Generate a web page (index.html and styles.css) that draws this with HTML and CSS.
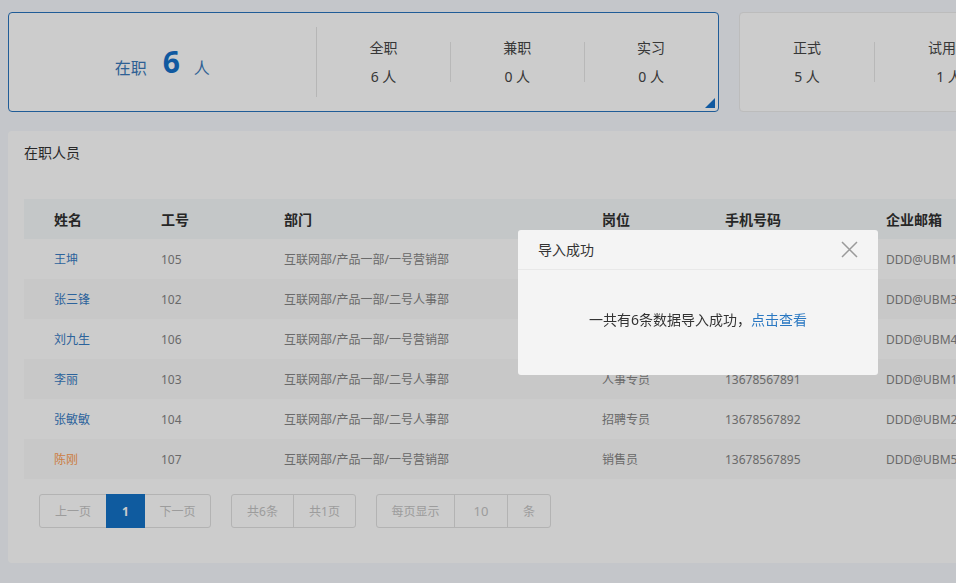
FILE: index.html
```html
<!DOCTYPE html>
<html lang="zh-CN">
<head>
<meta charset="utf-8">
<title>在职人员</title>
<link rel="stylesheet" href="styles.css">
</head>
<body>
<div class="page">
  <div class="stats-row">
    <div class="stat-card primary">
      <div class="summary">
        <span class="sum-label">在职</span>
        <span class="sum-num">6</span>
        <span class="sum-unit">人</span>
      </div>
      <div class="stat"><div class="stat-t">全职</div><div class="stat-v">6 人</div></div>
      <i class="sep"></i>
      <div class="stat"><div class="stat-t">兼职</div><div class="stat-v">0 人</div></div>
      <i class="sep"></i>
      <div class="stat"><div class="stat-t">实习</div><div class="stat-v">0 人</div></div>
      <span class="corner"></span>
    </div>
    <div class="stat-card">
      <div class="stat"><div class="stat-t">正式</div><div class="stat-v">5 人</div></div>
      <i class="sep"></i>
      <div class="stat wide"><div class="stat-t">试用期</div><div class="stat-v">1 人</div></div>
      <i class="sep"></i>
      <div class="stat"><div class="stat-t">待离职</div><div class="stat-v">0 人</div></div>
    </div>
  </div>

  <div class="panel">
    <div class="panel-title">在职人员</div>
    <table class="grid">
      <colgroup>
        <col class="c1"><col class="c2"><col class="c3"><col class="c4"><col class="c5"><col class="c6">
      </colgroup>
      <thead>
        <tr><th>姓名</th><th>工号</th><th>部门</th><th>岗位</th><th>手机号码</th><th>企业邮箱</th></tr>
      </thead>
      <tbody>
        <tr><td class="name">王坤</td><td>105</td><td>互联网部/产品一部/一号营销部</td><td>销售员</td><td>13678567896</td><td>DDD@UBM1.com</td></tr>
        <tr><td class="name">张三锋</td><td>102</td><td>互联网部/产品一部/二号人事部</td><td>人事专员</td><td>13678567893</td><td>DDD@UBM3.com</td></tr>
        <tr><td class="name">刘九生</td><td>106</td><td>互联网部/产品一部/一号营销部</td><td>销售员</td><td>13678567894</td><td>DDD@UBM4.com</td></tr>
        <tr><td class="name">李丽</td><td>103</td><td>互联网部/产品一部/二号人事部</td><td>人事专员</td><td>13678567891</td><td>DDD@UBM1.com</td></tr>
        <tr><td class="name">张敏敏</td><td>104</td><td>互联网部/产品一部/二号人事部</td><td>招聘专员</td><td>13678567892</td><td>DDD@UBM2.com</td></tr>
        <tr><td class="name warn">陈刚</td><td>107</td><td>互联网部/产品一部/一号营销部</td><td>销售员</td><td>13678567895</td><td>DDD@UBM5.com</td></tr>
      </tbody>
    </table>
    <div class="pager">
      <div class="pg-group">
        <span class="pg w-prev">上一页</span>
        <span class="pg w-cur active">1</span>
        <span class="pg w-next">下一页</span>
      </div>
      <div class="pg-group">
        <span class="pg w-total">共6条</span>
        <span class="pg w-total">共1页</span>
      </div>
      <div class="pg-group">
        <span class="pg w-per">每页显示</span>
        <span class="pg w-num">10</span>
        <span class="pg w-unit">条</span>
      </div>
    </div>
  </div>
</div>

<div class="mask"></div>

<div class="modal">
  <div class="modal-head">
    <span class="modal-title">导入成功</span>
    <svg class="modal-close" width="17" height="17" viewBox="0 0 17 17"><path d="M1 1L16 16M16 1L1 16" stroke="#9a9a9a" stroke-width="1.5" fill="none"/></svg>
  </div>
  <div class="modal-body">一共有6条数据导入成功，<a class="modal-link">点击查看</a></div>
</div>
</body>
</html>
```

FILE: styles.css
```css
html, body {
  margin: 0;
  padding: 0;
  overflow: hidden;
  height: 100%;
}
body {
  background: #f5f8fd;
  font-family: "Noto Sans", "Noto Sans CJK SC", sans-serif;
  color: #333;
  font-size: 14px;
}
.page {
  width: 1400px;
  padding: 12px 8px 0 8px;
}
.stats-row {
  display: flex;
  gap: 20px;
  margin-bottom: 19px;
}
.stat-card {
  position: relative;
  display: flex;
  align-items: center;
  width: 711px;
  height: 100px;
  box-sizing: border-box;
  background: #fff;
  border: 1px solid #ebebeb;
  border-radius: 4px;
}
.stat-card.primary {
  border-color: #2874bd;
}
.summary {
  width: 307px;
  height: 70px;
  display: flex;
  align-items: center;
  justify-content: center;
  border-right: 1px solid #e4e4e4;
  color: #3a79ba;
}
.sum-label, .sum-unit {
  font-size: 16px;
  line-height: 20px;
  margin-top: 12px;
}
.sum-num {
  font-size: 30px;
  font-weight: 700;
  color: #1570c8;
  margin: 0 14px 0 16px;
  line-height: 34px;
}
.stat {
  width: 134px;
  text-align: center;
  color: #454545;
  line-height: 20px;
}
.stat.wide { width: 150px; }
.stat-t { margin-bottom: 9px; }
.sep {
  width: 1px;
  height: 40px;
  background: #e6e6e6;
  margin: 0 -1px 0 0;
  align-self: center;
}
.corner {
  position: absolute;
  right: 3px;
  bottom: 3px;
  width: 0;
  height: 0;
  border-left: 10px solid transparent;
  border-bottom: 10px solid #1570c8;
}

.panel {
  background: #fff;
  border-radius: 4px;
  height: 432px;
  box-sizing: border-box;
  padding: 12px 16px 0 16px;
}
.panel-title {
  line-height: 20px;
  color: #333;
  margin-bottom: 36px;
}
.grid {
  border-collapse: collapse;
  table-layout: fixed;
  width: 1368px;
}
.c1 { width: 107px; }
.c2 { width: 123px; }
.c3 { width: 318px; }
.c4 { width: 123px; }
.c5 { width: 161px; }
.c6 { width: 536px; }
.grid th, .grid td {
  height: 40px;
  padding: 0 0 0 30px;
  text-align: left;
  white-space: nowrap;
  overflow: hidden;
  box-sizing: border-box;
}
.grid th {
  background: #f5f9fa;
  font-weight: 700;
  color: #303030;
  font-size: 14px;
}
.grid td {
  font-size: 12px;
  color: #858585;
}
.grid tbody tr:nth-child(even) td {
  background: #fafafa;
}
.grid td.name { color: #387cc4; }
.grid td.name.warn { color: #ff9f55; }

.pager {
  display: flex;
  gap: 20px;
  margin: 15px 0 0 15px;
}
.pg-group {
  display: flex;
  border: 1px solid #e0e0e0;
  border-radius: 3px;
  height: 34px;
  box-sizing: border-box;
}
.pg {
  display: flex;
  align-items: center;
  justify-content: center;
  font-size: 12px;
  color: #c4c4c4;
  border-left: 1px solid #e0e0e0;
}
.pg:first-child { border-left: none; }
.pg.active {
  background: #1372c7;
  color: #fff;
  border-left: none;
  margin-top: -1px;
  margin-bottom: -1px;
  font-weight: 700;
}
.pg.active + .pg { border-left: none; }
.w-prev { width: 66px; }
.w-cur { width: 39px; }
.w-next { width: 65px; }
.w-total { width: 61px; }
.w-per { width: 77px; }
.w-num { width: 52px; font-size: 13px; }
.w-unit { width: 42px; }

.mask {
  position: fixed;
  inset: 0;
  background: rgba(0, 0, 0, 0.2);
}
.modal {
  position: absolute;
  left: 518px;
  top: 230px;
  width: 360px;
  height: 145px;
  background: #f4f4f4;
  border-radius: 3px;
  display: flex;
  flex-direction: column;
}
.modal-head {
  height: 39px;
  border-bottom: 1px solid #e8e8e8;
  display: flex;
  align-items: center;
  justify-content: space-between;
  padding: 0 20px;
}
.modal-title {
  font-size: 14px;
  color: #333;
  line-height: 20px;
}
.modal-close {
  margin-right: 0;
}
.modal-body {
  flex: 1;
  display: flex;
  align-items: center;
  justify-content: center;
  font-size: 14px;
  color: #333;
  padding-bottom: 8px;
}
.modal-link {
  color: #2a78c2;
}
```
